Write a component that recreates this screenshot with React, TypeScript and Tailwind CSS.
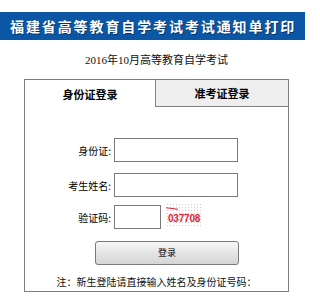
import React, { useState } from 'react';

const cjk = { fontFamily: '"Noto Sans CJK SC", "Noto Sans", sans-serif' };

export default function App() {
  const [tab, setTab] = useState<'id' | 'ticket'>('id');
  const [idNo, setIdNo] = useState('');
  const [name, setName] = useState('');
  const [code, setCode] = useState('');

  return (
    <div className="w-[305px] h-[304px] bg-white pt-[12px] text-black" style={cjk}>
      {/* header bar */}
      <div className="h-[28px] bg-[#0b57a6] flex items-center pl-[10px]">
        <h1 className="text-white font-bold text-[14px] leading-none tracking-[1.9px] whitespace-nowrap [text-shadow:1px_1px_0_#06356b]">
          福建省高等教育自学考试考试通知单打印
        </h1>
      </div>

      <div
        className="ml-[24px] w-[265px] mt-[12px] h-[16px] leading-[16px] text-center text-[11px] text-[#111]"
        style={{ fontFamily: '"Liberation Serif", "Noto Sans CJK SC", serif' }}
      >
        2016年10月高等教育自学考试
      </div>

      {/* login box */}
      <div className="ml-[24px] mt-[11px] w-[265px] h-[213px] border border-[#7f7f7f] flex flex-col">
        <div className="flex h-[27px]">
          <button
            onClick={() => setTab('id')}
            className={`w-[130px] h-full text-[11px] font-bold flex items-center justify-center pt-[2px] ${
              tab === 'id' ? 'bg-white' : 'bg-[#eeeeee] border-b border-[#7f7f7f]'
            }`}
          >
            身份证登录
          </button>
          <button
            onClick={() => setTab('ticket')}
            className={`flex-1 h-full text-[11px] font-bold flex items-center justify-center border-l border-l-[#2a9df4] ${
              tab === 'ticket' ? 'bg-white' : 'bg-[#eeeeee] border-b border-b-[#7f7f7f]'
            }`}
          >
            准考证登录
          </button>
        </div>

        <form onSubmit={(e) => e.preventDefault()} className="flex flex-col">
          <div className="flex items-center mt-[31px]">
            <label className="w-[87px] text-right text-[10px] pr-[1px]">身份证:</label>
            <input
              value={idNo}
              onChange={(e) => setIdNo(e.target.value)}
              className="ml-[2px] w-[124px] h-[24px] border border-[#7a7a7a] outline-none px-1 text-[11px]"
            />
          </div>
          <div className="flex items-center mt-[11px]">
            <label className="w-[87px] text-right text-[10px] pr-[1px]">考生姓名:</label>
            <input
              value={name}
              onChange={(e) => setName(e.target.value)}
              className="ml-[2px] w-[124px] h-[24px] border border-[#7a7a7a] outline-none px-1 text-[11px]"
            />
          </div>
          <div className="flex items-center mt-[8px]">
            <label className="w-[87px] text-right text-[10px] pr-[1px]">验证码:</label>
            <input
              value={code}
              onChange={(e) => setCode(e.target.value)}
              className="ml-[2px] w-[47px] h-[24px] border border-[#7a7a7a] outline-none px-1 text-[11px]"
            />
            <span className="relative ml-[5px] mt-[-4px] px-[2px] bg-[radial-gradient(#d9c9c9_0.6px,transparent_0.8px)] bg-[length:3px_3px]">
              <span
                className="text-[#d8283a] text-[10px] font-bold tracking-[-0.2px] leading-none"
                style={{ fontFamily: '"Liberation Sans", Arial, sans-serif' }}
              >
                037708
              </span>
              <span className="absolute left-0 top-[5px] w-[12px] h-px bg-[#d8283a] rotate-[8deg]" />
            </span>
          </div>

          <button
            type="submit"
            className="ml-[70px] mt-[12px] w-[144px] h-[24px] rounded-[3px] border border-[#7a7a7a] bg-gradient-to-b from-[#f6f6f6] to-[#d4d4d4] text-[9px] flex items-center justify-center"
          >
            登录
          </button>

          <p className="mt-[10px] h-[14px] leading-[14px] text-center text-[10px] text-[#111]">
            注：新生登陆请直接输入姓名及身份证号码：
          </p>
        </form>
      </div>
    </div>
  );
}
